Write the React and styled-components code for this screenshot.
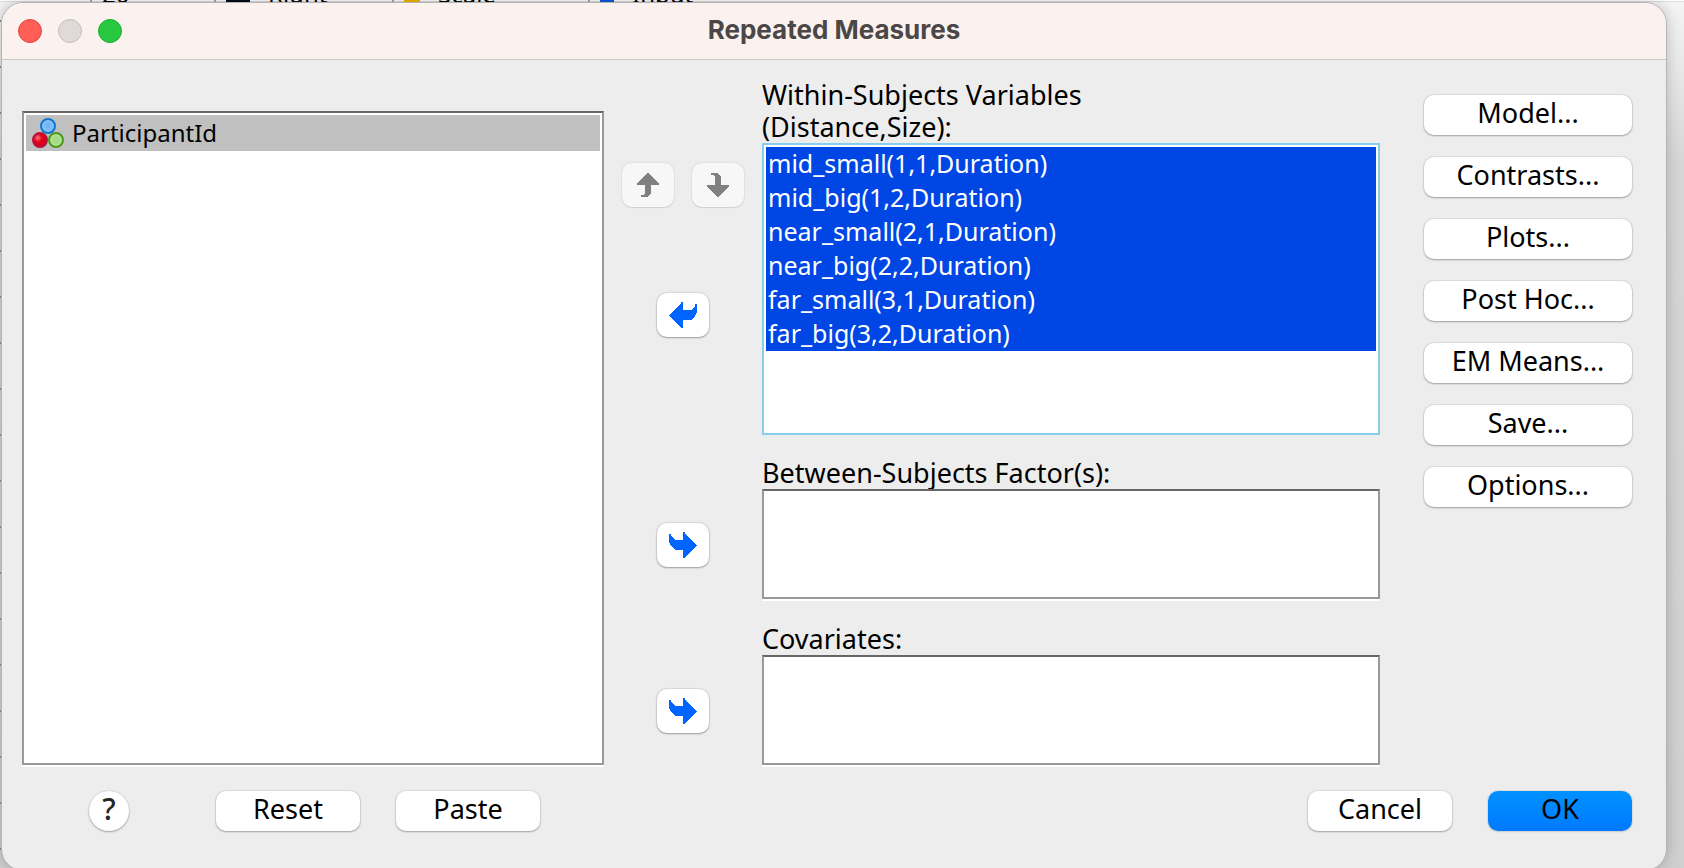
import React from "react";
import styled, { createGlobalStyle } from "styled-components";

const GlobalStyle = createGlobalStyle`
  *, *::before, *::after { box-sizing: border-box; }
  html, body { margin: 0; height: 100%; overflow: hidden; }
  body {
    font-family: "Noto Sans", "Open Sans", sans-serif;
    color: #000;
    background: linear-gradient(#f4f4f4, #d6d6d6 160px, #cfcfcf);
  }
`;

const Desktop = styled.div`
  padding: 0 17px 0 1px;
  background: repeating-linear-gradient(transparent 0 20px, #8c8c8c 20px 22px, transparent 22px 46px) left top / 2px 100% no-repeat;
`;

const SheetEdge = styled.div`
  display: grid;
  grid-template-columns: 90px 124px 178px 196px 1fr;
  height: 2px;
  margin: 0 -17px 0 -1px;
  overflow: hidden;
  background: linear-gradient(#fff 0 1px, #dcdcdc 1px);
`;

const SheetCell = styled.div`
  display: flex;
  align-items: flex-end;
  gap: 18px;
  height: 2px;
  padding-left: 10px;
  border-left: 2px solid #999;
  font-size: 24px;
  line-height: 17px;
`;

const SheetMark = styled.i`
  width: ${(p) => p.$width};
  height: 2px;
  background: ${(p) => p.$color};
`;

const Window = styled.main`
  border: 1px solid #b4b4b4;
  border-radius: 22px;
  background: #ededed;
  box-shadow: 0 0 14px rgba(0, 0, 0, 0.2);
  overflow: hidden;
`;

const TitleBar = styled.header`
  display: grid;
  grid-template-columns: 120px 1fr 120px;
  align-items: center;
  height: 57px;
  padding: 0 16px;
  background: #fbf2f0;
  border-bottom: 1px solid #c9c7c7;
`;

const Lights = styled.div`
  display: flex;
  gap: 16px;
`;

const Light = styled.button`
  width: 24px;
  height: 24px;
  padding: 0;
  border: 1px solid ${(p) => p.$edge};
  border-radius: 50%;
  background: ${(p) => p.$fill};
`;

const Title = styled.h1`
  margin: 0;
  padding-bottom: 2px;
  text-align: center;
  font: 700 26px/32px Inter, sans-serif;
  color: #4b4746;
`;

const Content = styled.div`
  display: grid;
  grid-template-columns: minmax(0, 582fr) 158px minmax(0, 618fr) 252px;
  padding: 19px 34px 0 20px;
`;

const SourcePane = styled.section`
  display: flex;
  padding-top: 32px;
`;

const ListBox = styled.ul`
  flex: 1;
  margin: 0;
  padding: 2px;
  list-style: none;
  min-height: ${(p) => p.$height || "0"};
  background: #fff;
  border: 2px solid ${(p) => (p.$focused ? "#87ceeb" : "#999")};
  border-top-color: ${(p) => (p.$focused ? "#87ceeb" : "#666")};
  box-shadow: ${(p) => (p.$focused ? "none" : "0 2px 0 #fff")};
`;

const SourceItem = styled.li`
  display: flex;
  align-items: center;
  gap: 8px;
  height: 36px;
  padding: 0 6px;
  font-size: 24px;
  line-height: 36px;
  background: #c0c0c0;
`;

const TargetItem = styled.li`
  height: 34px;
  padding: 0 2px;
  font-size: 25px;
  line-height: 32px;
  white-space: nowrap;
  color: #fff;
  background: #0046e4;
`;

const ArrowPane = styled.div`
  display: grid;
  grid-template-rows: 128px 130px 230px 166px;
`;

const ArrowRow = styled.div`
  display: flex;
  justify-content: center;
  align-self: end;
  gap: 18px;
`;

const ArrowButton = styled.button`
  display: flex;
  align-items: center;
  justify-content: center;
  width: 52px;
  height: 44px;
  padding: 0;
  border: 0;
  border-radius: 10px;
  color: ${(p) => (p.disabled ? "#808080" : "#0064ff")};
  background: ${(p) => (p.disabled ? "#f7f7f7" : "#fff")};
  box-shadow: ${(p) =>
    p.disabled
      ? "0 0 1px 1px rgba(0,0,0,.05), 0 1px 1px rgba(0,0,0,.08)"
      : "0 0 1px 1px rgba(0,0,0,.08), 0 1px 2px rgba(0,0,0,.28)"};
`;

const TargetPane = styled.div`
  display: flex;
  flex-direction: column;
`;

const Field = styled.section`
  display: flex;
  flex-direction: column;
  margin-bottom: ${(p) => p.$gap || "0"};
`;

const FieldLabel = styled.h2`
  margin: 0;
  font-size: 27px;
  line-height: 32px;
  font-weight: 400;
`;

const OptionPane = styled.nav`
  display: flex;
  flex-direction: column;
  gap: 22px;
  padding: 16px 0 0 44px;
`;

const PushButton = styled.button`
  width: ${(p) => p.$width || "100%"};
  height: 40px;
  padding: 0 0 4px;
  border: 0;
  border-radius: 10px;
  font: 400 27px/36px "Noto Sans", "Open Sans", sans-serif;
  color: #000;
  background: ${(p) => (p.$primary ? "linear-gradient(#0091ff, #007aff)" : "#fff")};
  box-shadow: 0 0 1px 1px rgba(0, 0, 0, 0.07), 0 1px 2px rgba(0, 0, 0, ${(p) => (p.$primary ? 0.08 : 0.28)});
`;

const HelpButton = styled(PushButton)`
  border-radius: 50%;
  font-size: 30px;
  font-weight: 500;
  color: #262626;
`;

const Footer = styled.footer`
  display: flex;
  justify-content: space-between;
  padding: 26px 34px 39px 87px;
`;

const ButtonGroup = styled.div`
  display: flex;
  gap: 36px;
`;

const HelpGroup = styled.div`
  display: flex;
  gap: 87px;
`;

function NominalIcon() {
  return (
    <svg width="32" height="30" viewBox="0 0 32 30" aria-hidden="true">
      <defs>
        <radialGradient id="blue"><stop offset="0" stopColor="#63b0f3" /><stop offset="1" stopColor="#93c8f8" /></radialGradient>
        <radialGradient id="red" cx="0.35" cy="0.35"><stop offset="0" stopColor="#ff7a7a" /><stop offset="0.6" stopColor="#e3001b" /><stop offset="1" stopColor="#d8001a" /></radialGradient>
        <radialGradient id="green"><stop offset="0" stopColor="#9fd67c" /><stop offset="1" stopColor="#b4e296" /></radialGradient>
      </defs>
      <circle cx="16" cy="8" r="7" fill="url(#blue)" stroke="#0f76cf" strokeWidth="2" />
      <circle cx="8" cy="22" r="7" fill="url(#red)" stroke="#b8103a" strokeWidth="2" />
      <circle cx="24" cy="22" r="7" fill="url(#green)" stroke="#4c9a1c" strokeWidth="2" />
    </svg>
  );
}

const arrows = {
  right: "M0 2H2V4L4 6L6 8H14V0H16V2L28 13V14L16 25V26H14V18H6L4 16L2 14L0 10Z",
  left: "M28 2H26V4L24 6L22 8H14V0H12V2L0 13V14L12 25V26H14V18H22L24 16L26 14L28 10Z",
  up: "M11 0L22 10V12H14V20L12 22L10 24H4V22H6L8 20V12H0V10Z",
  down: "M11 24L22 14V12H14V4L12 2L10 0H4V2H6L8 4V12H0V14Z",
};

function Arrow({ direction }) {
  const vertical = direction === "up" || direction === "down";
  const w = vertical ? 22 : 28;
  const h = vertical ? 24 : 26;
  return (
    <svg width={w} height={h} viewBox={`0 0 ${w} ${h}`} shapeRendering="crispEdges" aria-hidden="true">
      <path d={arrows[direction]} fill="currentColor" />
    </svg>
  );
}

const withinVariables = [
  "mid_small(1,1,Duration)",
  "mid_big(1,2,Duration)",
  "near_small(2,1,Duration)",
  "near_big(2,2,Duration)",
  "far_small(3,1,Duration)",
  "far_big(3,2,Duration)",
];

const options = ["Model...", "Contrasts...", "Plots...", "Post Hoc...", "EM Means...", "Save...", "Options..."];

export default function App() {
  return (
    <Desktop>
      <GlobalStyle />
      <SheetEdge aria-hidden="true">
        <span />
        <SheetCell>20</SheetCell>
        <SheetCell><SheetMark $width="24px" $color="#000a14" />Right</SheetCell>
        <SheetCell><SheetMark $width="16px" $color="#d9a400" />Scale</SheetCell>
        <SheetCell><SheetMark $width="14px" $color="#0a50c8" />Input</SheetCell>
      </SheetEdge>
      <Window>
        <TitleBar>
          <Lights>
            <Light aria-label="Close" $fill="#ff5f57" $edge="#e2463f" />
            <Light aria-label="Minimize" $fill="#dfdad7" $edge="#c3bebb" />
            <Light aria-label="Zoom" $fill="#28c840" $edge="#1dad2b" />
          </Lights>
          <Title>Repeated Measures</Title>
        </TitleBar>
        <Content>
          <SourcePane>
            <ListBox aria-label="Variables">
              <SourceItem>
                <NominalIcon />
                ParticipantId
              </SourceItem>
            </ListBox>
          </SourcePane>
          <ArrowPane>
            <ArrowRow>
              <ArrowButton disabled aria-label="Move up"><Arrow direction="up" /></ArrowButton>
              <ArrowButton disabled aria-label="Move down"><Arrow direction="down" /></ArrowButton>
            </ArrowRow>
            <ArrowRow>
              <ArrowButton aria-label="Remove within-subjects variable"><Arrow direction="left" /></ArrowButton>
            </ArrowRow>
            <ArrowRow>
              <ArrowButton aria-label="Add factor"><Arrow direction="right" /></ArrowButton>
            </ArrowRow>
            <ArrowRow>
              <ArrowButton aria-label="Add covariate"><Arrow direction="right" /></ArrowButton>
            </ArrowRow>
          </ArrowPane>
          <TargetPane>
            <Field $gap="22px">
              <FieldLabel id="within">Within-Subjects Variables<br />(Distance,Size):</FieldLabel>
              <ListBox $focused $height="292px" aria-labelledby="within">
                {withinVariables.map((v) => <TargetItem key={v}>{v}</TargetItem>)}
              </ListBox>
            </Field>
            <Field $gap="24px">
              <FieldLabel id="between">Between-Subjects Factor(s):</FieldLabel>
              <ListBox $height="110px" aria-labelledby="between" />
            </Field>
            <Field>
              <FieldLabel id="covariates">Covariates:</FieldLabel>
              <ListBox $height="110px" aria-labelledby="covariates" />
            </Field>
          </TargetPane>
          <OptionPane>
            {options.map((o) => <PushButton key={o}>{o}</PushButton>)}
          </OptionPane>
        </Content>
        <Footer>
          <HelpGroup>
            <HelpButton $width="40px" aria-label="Help">?</HelpButton>
            <ButtonGroup>
              <PushButton $width="144px">Reset</PushButton>
              <PushButton $width="144px">Paste</PushButton>
            </ButtonGroup>
          </HelpGroup>
          <ButtonGroup>
            <PushButton $width="144px">Cancel</PushButton>
            <PushButton $width="144px" $primary>OK</PushButton>
          </ButtonGroup>
        </Footer>
      </Window>
    </Desktop>
  );
}
